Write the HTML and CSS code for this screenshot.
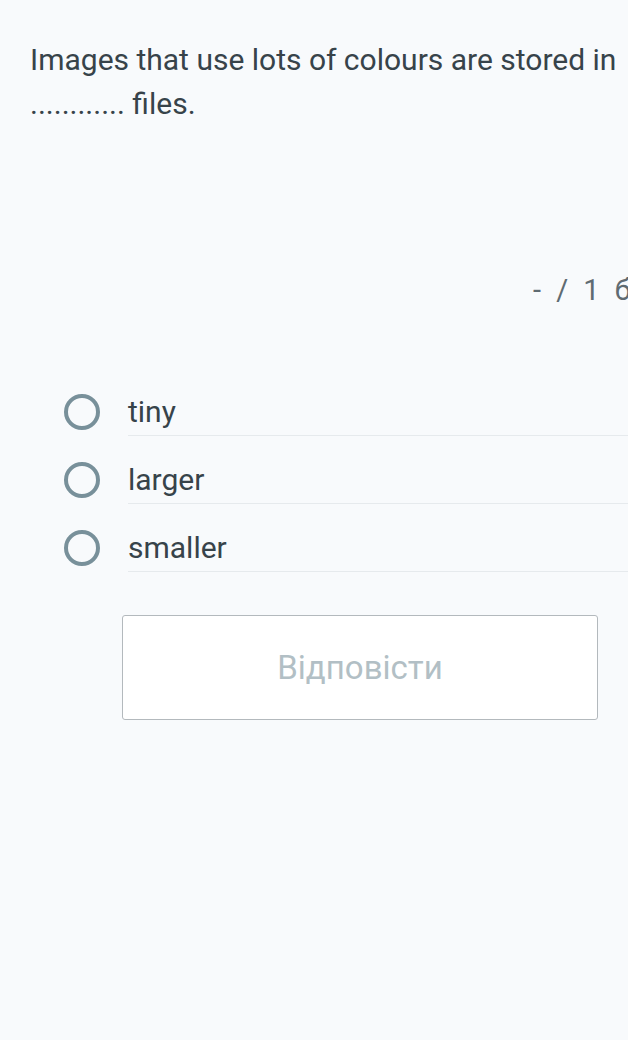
FILE: index.html
```html
<!DOCTYPE html>
<html lang="uk">
<head>
  <meta charset="UTF-8">
  <meta name="viewport" content="width=device-width, initial-scale=1.0">
  <title>Quiz question</title>
  <link rel="stylesheet" href="styles.css">
</head>
<body>
  <div class="question">
    <p class="question-text">Images that use lots of colours are stored in ............ files.</p>

    <div class="score">- / 1 бал</div>

    <ul class="options">
      <li class="option">
        <span class="radio"></span>
        <span class="label">tiny</span>
      </li>
      <li class="option">
        <span class="radio"></span>
        <span class="label">larger</span>
      </li>
      <li class="option">
        <span class="radio"></span>
        <span class="label">smaller</span>
      </li>
    </ul>

    <div class="actions">
      <button class="answer-btn" disabled>Відповісти</button>
    </div>
  </div>
</body>
</html>
```

FILE: styles.css
```css
body {
  margin: 0;
  background: #f8fafc;
  font-family: Roboto, "Noto Sans", sans-serif;
  color: #37434a;
  overflow: hidden;
}

.question {
  width: 628px;
  overflow: hidden;
}

.question-text {
  margin: 38px 0 0;
  padding: 0 8px 0 30px;
  font-size: 30px;
  line-height: 44px;
}

/* score runs off the right edge like on the phone */
.score {
  margin-top: 144px;
  padding-left: 533px;
  white-space: nowrap;
  font-size: 29px;
  letter-spacing: 4px;
  color: #5f6b72;
  line-height: 40px;
}

.options {
  list-style: none;
  margin: 58px 0 0;
  padding: 0 0 0 64px;
}

.option {
  display: flex;
  height: 68px;
}

.radio {
  flex: none;
  width: 28px;
  height: 28px;
  border: 4px solid #78909a;
  border-radius: 50%;
  margin: 26px 28px 0 0;
}

.label {
  flex: 1;
  display: flex;
  align-items: center;
  padding-top: 20px;
  border-bottom: 1px solid #e6eaed;
  font-size: 30px;
}

.actions {
  padding: 43px 0 0 122px;
}

.answer-btn {
  width: 476px;
  height: 105px;
  background: #fff;
  border: 1px solid #b3b9bd;
  border-radius: 3px;
  font-family: Roboto, "Noto Sans", sans-serif;
  font-size: 33px;
  color: #b2bfc5;
}
```
